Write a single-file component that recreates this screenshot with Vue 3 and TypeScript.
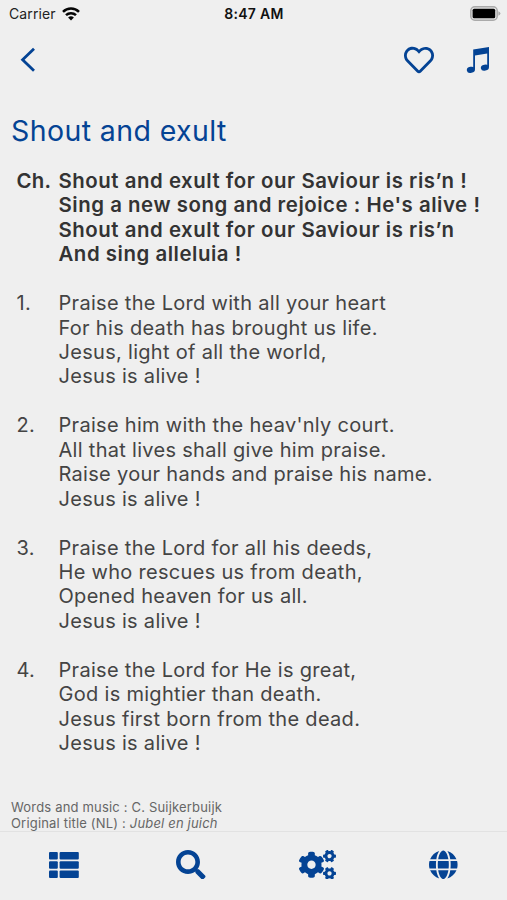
<script setup lang="ts">
interface Stanza {
  label: string
  chorus?: boolean
  lines: string[]
}

const title = 'Shout and exult'

const stanzas: Stanza[] = [
  {
    label: 'Ch.',
    chorus: true,
    lines: [
      'Shout and exult for our Saviour is ris’n !',
      "Sing a new song and rejoice : He's alive !",
      'Shout and exult for our Saviour is ris’n',
      'And sing alleluia !',
    ],
  },
  {
    label: '1.',
    lines: [
      'Praise the Lord with all your heart',
      'For his death has brought us life.',
      'Jesus, light of all the world,',
      'Jesus is alive !',
    ],
  },
  {
    label: '2.',
    lines: [
      "Praise him with the heav'nly court.",
      'All that lives shall give him praise.',
      'Raise your hands and praise his name.',
      'Jesus is alive !',
    ],
  },
  {
    label: '3.',
    lines: [
      'Praise the Lord for all his deeds,',
      'He who rescues us from death,',
      'Opened heaven for us all.',
      'Jesus is alive !',
    ],
  },
  {
    label: '4.',
    lines: [
      'Praise the Lord for He is great,',
      'God is mightier than death.',
      'Jesus first born from the dead.',
      'Jesus is alive !',
    ],
  },
]
</script>

<template>
  <div class="screen">
    <header class="status">
      <div class="carrier">
        <span>Carrier</span>
        <svg class="wifi" viewBox="0 0 18 14" fill="none" stroke="#050505" stroke-width="2.5">
          <path d="M1 4.9a11.3 11.3 0 0 1 16 0" />
          <path d="M4 8.2a7.1 7.1 0 0 1 10 0" />
          <path d="M9 13.6L6.1 10.6a4.1 4.1 0 0 1 5.8 0z" fill="#050505" stroke="none" />
        </svg>
      </div>
      <span class="clock">8:47 AM</span>
      <svg class="battery" viewBox="0 0 31 15">
        <rect x=".8" y=".8" width="26.4" height="13.4" rx="4" fill="#e4e4e4" stroke="#aaa" stroke-width="1.5" />
        <rect x="2.6" y="2.7" width="22.6" height="9.6" rx="1.6" fill="#000" />
        <path d="M28.4 5.2q2 .8 2 2.3t-2 2.3z" fill="#aaa" />
      </svg>
    </header>

    <nav class="navbar">
      <svg class="back" viewBox="0 0 16 26" fill="none" stroke="currentColor" stroke-width="2.8">
        <path d="M14 1.7L2.6 12.7L14 23.7" />
      </svg>
      <div class="actions">
        <svg class="heart" viewBox="0 0 512 512" fill="currentColor">
          <path d="M458.4 64.3C400.6 15.7 311.3 23 256 79.3 200.7 23 111.4 15.6 53.6 64.3-21.6 127.6-10.6 230.8 43 285.5l175.4 178.7c10 10.2 23.4 15.9 37.6 15.9 14.3 0 27.6-5.6 37.6-15.8L469 285.6c53.5-54.7 64.7-157.9-10.6-221.3zm-23.6 187.5L259.4 430.5c-2.4 2.4-4.4 2.4-6.8 0L77.2 251.8c-36.5-37.2-43.9-107.6 7.3-150.7 38.9-32.7 98.9-27.8 136.5 10.5l35 35.7 35-35.7c37.8-38.5 97.8-43.2 136.5-10.6 51.1 43.1 43.5 113.9 7.3 150.8z" />
        </svg>
        <svg class="note" viewBox="0 0 24 28" fill="currentColor">
          <path d="M7.2 3.4L23 1V21h-1.8V7.4L9 9.4V23.5H7.2z" />
          <ellipse cx="4.9" cy="23.8" rx="4.1" ry="3" transform="rotate(-12 4.9 23.8)" />
          <ellipse cx="18.9" cy="21.6" rx="4.1" ry="3" transform="rotate(-12 18.9 21.6)" />
        </svg>
      </div>
    </nav>

    <main class="song">
      <h1>{{ title }}</h1>
      <section v-for="s in stanzas" :key="s.label" class="stanza" :class="{ chorus: s.chorus }">
        <span class="label">{{ s.label }}</span>
        <div class="lines">
          <div v-for="line in s.lines" :key="line">{{ line }}</div>
        </div>
      </section>
      <footer class="credits">
        <div>Words and music : C. Suijkerbuijk</div>
        <div>Original title (NL) : <em>Jubel en juich</em></div>
      </footer>
    </main>

    <div class="tabs">
      <div class="tab">
        <svg class="list" viewBox="0 0 30 26" fill="currentColor">
          <g v-for="y in [0, 9.2, 18.4]" :key="y">
            <rect x="0" :y="y" width="8.8" height="7.6" rx="1" />
            <rect x="10.6" :y="y" width="19.2" height="7.6" rx="1" />
          </g>
        </svg>
      </div>
      <div class="tab">
        <svg class="search" viewBox="0 0 512 512" fill="currentColor">
          <path d="M505 442.7L405.3 343c-4.5-4.5-10.6-7-17-7H372c27.6-35.3 44-79.7 44-128C416 93.1 322.9 0 208 0S0 93.1 0 208s93.1 208 208 208c48.3 0 92.7-16.4 128-44v16.3c0 6.4 2.5 12.5 7 17l99.7 99.7c9.4 9.4 24.6 9.4 33.9 0l28.3-28.3c9.4-9.4 9.4-24.6.1-34zM208 336c-70.7 0-128-57.2-128-128 0-70.7 57.2-128 128-128 70.7 0 128 57.2 128 128 0 70.7-57.2 128-128 128z" />
        </svg>
      </div>
      <div class="tab">
        <svg class="cogs" viewBox="0 0 640 512" fill="currentColor">
          <path v-for="dy in [0, 299]" :key="dy" :transform="`translate(0 ${dy})`" d="M512.1 191l-8.2 14.3c-3 5.3-9.4 7.5-15.1 5.4-11.8-4.4-22.6-10.7-32.1-18.6-4.6-3.8-5.8-10.5-2.8-15.7l8.2-14.3c-6.9-8-12.3-17.3-15.9-27.4h-16.5c-6 0-11.2-4.3-12.2-10.3-2-12-2.1-24.6 0-37.1 1-6 6.2-10.4 12.2-10.4h16.5c3.6-10.1 9-19.4 15.9-27.4l-8.2-14.3c-3-5.2-1.9-11.9 2.8-15.7 9.5-7.9 20.4-14.2 32.1-18.6 5.7-2.1 12.1.1 15.1 5.4l8.2 14.3c10.5-1.9 21.2-1.9 31.7 0L552 6.3c3-5.3 9.4-7.5 15.1-5.4 11.8 4.4 22.6 10.7 32.1 18.6 4.6 3.8 5.8 10.5 2.8 15.7l-8.2 14.3c6.9 8 12.3 17.3 15.9 27.4h16.5c6 0 11.2 4.3 12.2 10.3 2 12 2.1 24.6 0 37.1-1 6-6.2 10.4-12.2 10.4h-16.5c-3.6 10.1-9 19.4-15.9 27.4l8.2 14.3c3 5.2 1.9 11.9-2.8 15.7-9.5 7.9-20.4 14.2-32.1 18.6-5.7 2.1-12.1-.1-15.1-5.4l-8.2-14.3c-10.4 1.9-21.2 1.9-31.7 0zm-10.5-58.8c38.5 29.6 82.4-14.3 52.8-52.8-38.5-29.7-82.4 14.3-52.8 52.8z" />
          <path d="M386.3 286.1l33.7 16.8c10.1 5.8 14.5 18.1 10.5 29.1-8.9 24.2-26.4 46.4-42.6 65.8-7.4 8.9-20.2 11.1-30.3 5.3l-29.1-16.8c-16 13.7-34.6 24.6-54.9 31.7v33.6c0 11.6-8.3 21.6-19.7 23.6-24.6 4.2-50.4 4.4-75.9 0-11.5-2-20-11.9-20-23.6V418c-20.3-7.2-38.9-18-54.9-31.7L74 403c-10 5.8-22.9 3.6-30.3-5.3-16.2-19.4-33.3-41.6-42.2-65.7-4-10.9.4-23.2 10.5-29.1l33.3-16.8c-3.9-20.9-3.9-42.4 0-63.4L12 205.8c-10.1-5.8-14.6-18.1-10.5-29 8.9-24.2 26-46.4 42.2-65.8 7.4-8.9 20.2-11.1 30.3-5.3l29.1 16.8c16-13.7 34.6-24.6 54.9-31.7V57.1c0-11.5 8.2-21.5 19.6-23.5 24.6-4.2 50.5-4.4 76-.1 11.5 2 20 11.9 20 23.6v33.6c20.3 7.2 38.9 18 54.9 31.7l29.1-16.8c10-5.8 22.9-3.6 30.3 5.3 16.2 19.4 33.2 41.6 42.1 65.8 4 10.9.1 23.2-10 29.1l-33.7 16.8c3.9 21 3.9 42.5 0 63.5zm-117.6 21.1c59.2-77-28.7-164.9-105.7-105.7-59.2 77 28.7 164.9 105.7 105.7z" />
        </svg>
      </div>
      <div class="tab">
        <svg class="globe" viewBox="0 0 496 512" fill="currentColor">
          <path d="M336.5 160C322 70.7 287.8 8 248 8s-74 62.7-88.5 152h177zM152 256c0 22.2 1.2 43.5 3.3 64h185.3c2.1-20.5 3.3-41.8 3.3-64s-1.2-43.5-3.3-64H155.3c-2.1 20.5-3.3 41.8-3.3 64zm324.7-96c-28.6-67.9-86.5-120.4-158-141.6 24.4 33.8 41.2 84.7 50 141.6h108zM177.2 18.4C105.8 39.6 47.8 92.1 19.3 160h108c8.7-56.9 25.5-107.8 49.9-141.6zM487.4 192H372.7c2.1 21 3.3 42.5 3.3 64s-1.2 43-3.3 64h114.6c5.5-20.5 8.6-41.8 8.6-64s-3.1-43.5-8.5-64zM120 256c0-21.5 1.2-43 3.3-64H8.6C3.2 212.5 0 233.8 0 256s3.2 43.5 8.6 64h114.6c-2-21-3.2-42.5-3.2-64zm39.5 96c14.5 89.3 48.7 152 88.5 152s74-62.7 88.5-152h-177zm159.3 141.6c71.4-21.2 129.4-73.7 158-141.6h-108c-8.8 56.9-25.6 107.8-50 141.6zM19.3 352c28.6 67.9 86.5 120.4 158 141.6-24.4-33.8-41.2-84.7-50-141.6h-108z" />
        </svg>
      </div>
    </div>
  </div>
</template>

<style>
body {
  background: #efefef;
}
</style>

<style scoped>
.screen {
  display: flex;
  flex-direction: column;
  height: 900px;
  overflow: hidden;
  background: #efefef;
  color: #444;
  font-family: Inter, 'Liberation Sans', sans-serif;
}
.screen svg {
  display: block;
  flex: none;
}
.status {
  display: grid;
  grid-template-columns: 1fr auto 1fr;
  align-items: center;
  height: 27px;
  padding: 0 6px 0 9px;
  color: #222;
  font-size: 14px;
  line-height: 27px;
}
.carrier {
  display: flex;
  align-items: center;
  gap: 6px;
  letter-spacing: 0.1px;
}
.wifi {
  width: 18px;
  height: 14px;
}
.clock {
  margin-right: 2px;
  color: #111;
  font-weight: 600;
  letter-spacing: 0.3px;
}
.battery {
  justify-self: end;
  width: 31px;
  height: 15px;
}
.navbar {
  display: flex;
  align-items: center;
  justify-content: space-between;
  height: 65px;
  padding: 0 17px 0 20px;
  color: #044394;
}
.back {
  width: 16px;
  height: 26px;
}
.actions {
  display: flex;
  align-items: center;
  gap: 32px;
}
.heart {
  width: 30px;
  height: 30px;
}
.note {
  width: 24px;
  height: 28px;
}
.song {
  flex: 1;
  min-height: 0;
  padding: 0 11px;
}
h1 {
  margin: 20px 0 19px;
  color: #044394;
  font-size: 28.5px;
  font-weight: 400;
  letter-spacing: 0.4px;
  line-height: 38px;
}
.stanza {
  display: grid;
  grid-template-columns: 42.5px 1fr;
  margin: 0 0 24.43px 5px;
  font-size: 20px;
  letter-spacing: 0.3px;
  line-height: 24.43px;
  white-space: nowrap;
}
.chorus {
  color: #333;
  font-size: 20.4px;
  font-weight: 600;
  letter-spacing: 0.54px;
}
.label {
  padding-left: 0.5px;
  letter-spacing: 0.3px;
}
.credits {
  margin-top: 43.5px;
  color: #666;
  font-size: 13px;
  letter-spacing: 0.18px;
  line-height: 16.3px;
}
.tabs {
  display: grid;
  grid-template-columns: repeat(4, 1fr);
  height: 68px;
  border-top: 1px solid #e2e2e2;
  color: #044394;
}
.tab {
  display: flex;
  align-items: center;
  justify-content: center;
  height: 65px;
  padding-left: 1.5px;
}
.tab:last-child {
  padding-left: 0;
}
.list {
  width: 30px;
  height: 26px;
}
.search {
  width: 29.5px;
  height: 29.5px;
}
.cogs {
  width: 37px;
  height: 29.6px;
}
.globe {
  width: 28.6px;
  height: 29.5px;
}
</style>
